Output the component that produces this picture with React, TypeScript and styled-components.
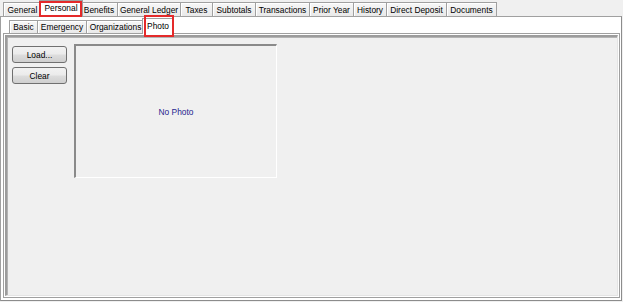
import styled, { createGlobalStyle } from 'styled-components';

const GlobalStyle = createGlobalStyle`
  html, body {
    margin: 0;
    padding: 0;
    background: #f0f0f0;
  }
  body {
    font-family: "Liberation Sans", Arial, sans-serif;
    font-size: 8.4px;
    color: #000;
  }
`;

const Window = styled.div`
  width: 623px;
  height: 302px;
  box-sizing: border-box;
  background: #f0f0f0;
`;

const TabStrip = styled.div<{ $height: number; $indent: number }>`
  display: flex;
  align-items: flex-end;
  height: ${(p) => p.$height}px;
  padding-left: ${(p) => p.$indent}px;
  box-sizing: border-box;
`;

const Tab = styled.div<{ $width: number; $active?: boolean; $height: number }>`
  position: relative;
  box-sizing: border-box;
  width: ${(p) => (p.$active ? p.$width + 4 : p.$width + 1)}px;
  height: ${(p) => (p.$active ? p.$height + 3 : p.$height)}px;
  margin: ${(p) => (p.$active ? '0 -3px -1px -2px' : '0 -1px 0 0')};
  z-index: ${(p) => (p.$active ? 2 : 1)};
  border: 1px solid #a0a0a0;
  border-bottom: none;
  background: ${(p) => (p.$active ? '#ffffff' : 'linear-gradient(#f7f7f7, #e9e9e9)')};
  box-shadow: ${(p) => (p.$active ? 'none' : 'inset 1px 1px 0 #ffffff')};
  display: flex;
  align-items: center;
  justify-content: center;
  white-space: nowrap;
  padding-bottom: ${(p) => (p.$active ? 2 : 0)}px;
`;

const Highlight = styled.span<{ $t: number; $l: number; $r: number; $b: number }>`
  position: absolute;
  top: ${(p) => p.$t}px;
  left: ${(p) => p.$l}px;
  right: ${(p) => p.$r}px;
  bottom: ${(p) => p.$b}px;
  border: 2px solid #e42a2a;
  pointer-events: none;
`;

const OuterPanel = styled.div`
  width: 622px;
  height: 285px;
  box-sizing: border-box;
  border: 1px solid #a0a0a0;
  border-right-color: #8c8c8c;
  border-bottom-color: #8c8c8c;
  background: #ffffff;
  padding: 0 1px 2px 2px;
`;

const InnerPanel = styled.div`
  width: 617px;
  height: 265px;
  box-sizing: border-box;
  border: 1px solid #a0a0a0;
  background: #ffffff;
  padding: 1px;
`;

const Sunken = styled.div`
  height: 100%;
  box-sizing: border-box;
  border-style: solid;
  border-width: 2px 1px 1px 2px;
  border-color: #9c9c9c #e4e4e4 #e4e4e4 #9c9c9c;
  box-shadow: inset 1px 1px 0 #b4b4b4;
  background: #f0f0f0;
  display: flex;
  align-items: flex-start;
  gap: 7px;
  padding: 7px 0 0 5px;
`;

const ButtonColumn = styled.div`
  display: flex;
  flex-direction: column;
  gap: 4px;
  margin-top: 2px;
`;

const Button = styled.button`
  width: 55px;
  height: 17px;
  box-sizing: border-box;
  padding: 0;
  border: 1px solid #707070;
  border-radius: 3px;
  background: linear-gradient(#f2f2f2 0%, #ebebeb 48%, #dddddd 52%, #cfcfcf 100%);
  font-family: "Liberation Sans", Arial, sans-serif;
  font-size: 8.4px;
  color: #000;
`;

const PhotoBox = styled.div`
  width: 203px;
  height: 134px;
  box-sizing: border-box;
  border-style: solid;
  border-width: 2px 1px 1px 2px;
  border-color: #8a8a8a #ffffff #ffffff #8a8a8a;
  background: #f0f0f0;
  display: flex;
  align-items: center;
  justify-content: center;
  color: #1f1f8f;
`;

const outerTabs = [
  { label: 'General', width: 38 },
  { label: 'Personal', width: 40, active: true },
  { label: 'Benefits', width: 37 },
  { label: 'General Ledger', width: 63 },
  { label: 'Taxes', width: 32 },
  { label: 'Subtotals', width: 43 },
  { label: 'Transactions', width: 54 },
  { label: 'Prior Year', width: 44 },
  { label: 'History', width: 33 },
  { label: 'Direct Deposit', width: 60 },
  { label: 'Documents', width: 50 },
];

const innerTabs = [
  { label: 'Basic', width: 28 },
  { label: 'Emergency', width: 49 },
  { label: 'Organizations', width: 58 },
  { label: 'Photo', width: 28, active: true },
];

export default function App() {
  return (
    <Window>
      <GlobalStyle />
      <TabStrip $height={16} $indent={3}>
        {outerTabs.map((t) => (
          <Tab key={t.label} $width={t.width} $height={14} $active={t.active}>
            {t.label}
            {t.active && <Highlight $t={0} $l={-1} $r={0} $b={0} />}
          </Tab>
        ))}
      </TabStrip>
      <OuterPanel>
        <TabStrip $height={16} $indent={6}>
          {innerTabs.map((t) => (
            <Tab key={t.label} $width={t.width} $height={13} $active={t.active}>
              {t.label}
              {t.active && <Highlight $t={-4} $l={1} $r={-1} $b={-3} />}
            </Tab>
          ))}
        </TabStrip>
        <InnerPanel>
          <Sunken>
            <ButtonColumn>
              <Button>Load...</Button>
              <Button>Clear</Button>
            </ButtonColumn>
            <PhotoBox>No Photo</PhotoBox>
          </Sunken>
        </InnerPanel>
      </OuterPanel>
    </Window>
  );
}
